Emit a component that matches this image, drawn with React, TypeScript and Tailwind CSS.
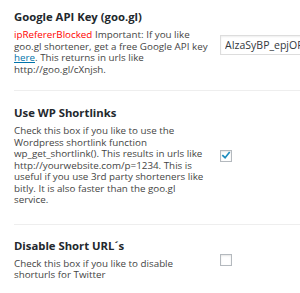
import React from 'react';

const Checkbox = ({ checked }: { checked: boolean }) => (
  <span className="flex h-[12px] w-[12px] items-center justify-center border border-[#b4b9be] bg-white shadow-[inset_0_1px_2px_rgba(0,0,0,0.1)]">
    {checked && (
      <svg viewBox="0 0 12 12" className="h-[11px] w-[11px]">
        <path d="M2.3 6.2 L4.9 8.6 L9.8 2.6" fill="none" stroke="#1e8cbe" strokeWidth="2" strokeLinecap="square" />
      </svg>
    )}
  </span>
);

const Section = ({
  title,
  children,
  control,
  className,
}: {
  title: string;
  children: React.ReactNode;
  control: React.ReactNode;
  className: string;
}) => (
  <div className={`flex items-center border-b border-[#eeeeee] ${className}`}>
    <div className="w-[200px] shrink-0">
      <div className="text-[11.3px] font-bold leading-[14px] text-[#23282d]">{title}</div>
      <div className="mt-[5px] whitespace-nowrap text-[9.8px] leading-[11.5px] text-[#444444]">{children}</div>
    </div>
    <div className="ml-[6px] shrink-0">{control}</div>
  </div>
);

export default function App() {
  return (
    <div className="h-[293px] w-[300px] overflow-hidden bg-white pl-[14px]" style={{ fontFamily: '"Open Sans", sans-serif' }}>
      <Section
        title="Google API Key (goo.gl)"
        className="pt-[10px] pb-[15px]"
        control={
          <input
            type="text"
            readOnly
            value="AIzaSyBP_epjOFk3mC0w"
            className="h-[20px] w-[160px] border border-[#dddddd] bg-white px-[4px] text-[10.5px] text-[#32373c] shadow-[inset_0_1px_2px_rgba(0,0,0,0.07)] outline-none"
          />
        }
      >
        <span className="text-[#ff0000]">ipRefererBlocked</span> Important: If you like
        <br />
        goo.gl shortener, get a free Google API key
        <br />
        <a href="#" className="text-[#0073aa] underline">here</a>. This returns in urls like
        <br />
        http://goo.gl/cXnjsh.
      </Section>
      <Section
        title="Use WP Shortlinks"
        className="pt-[15px] pb-[18px]"
        control={<Checkbox checked />}
      >
        Check this box if you like to use the
        <br />
        Wordpress shortlink function
        <br />
        wp_get_shortlink(). This results in urls like
        <br />
        http://yourwebsite.com/p=1234. This is
        <br />
        useful if you use 3rd party shorteners like
        <br />
        bitly. It is also faster than the goo.gl
        <br />
        service.
      </Section>
      <Section
        title="Disable Short URL´s"
        className="pt-[14px] pb-[19px]"
        control={<Checkbox checked={false} />}
      >
        Check this box if you like to disable
        <br />
        shorturls for Twitter
      </Section>
    </div>
  );
}
